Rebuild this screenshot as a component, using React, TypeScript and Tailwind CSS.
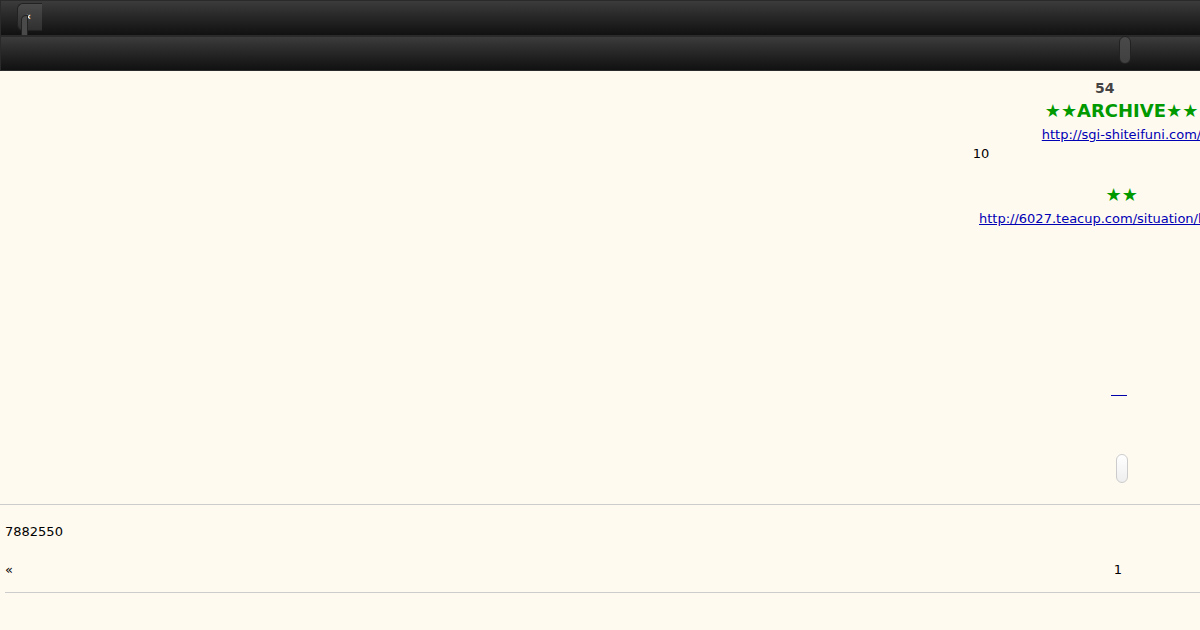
const barClass =
  'flex w-[1240px] items-start border border-[#2a2a2a] bg-gradient-to-b from-[#3c3c3c] to-[#111111]'

function Toolbar() {
  return (
    <header className="w-full overflow-hidden">
      {/* Navigation bar */}
      <div className={`${barClass} h-9 pl-4 pt-0.5`}>
        <div className="relative h-7 w-[25px] rounded-l-md border border-r-0 border-[#222] bg-gradient-to-b from-[#4a4a4a] to-[#303030] text-white">
          <span className="absolute left-[6px] top-[7px] text-[11px] font-bold leading-[12px]">«</span>
          <span className="absolute left-[3px] top-[11px] h-5 w-[7px] rounded-tl-[5px] border border-b-0 border-[#222] bg-[#4a4a4a]" />
        </div>
      </div>
      {/* Title bar */}
      <div className={`${barClass} h-[35px] pl-[1118px]`}>
        <div className="-mt-px h-7 w-3 shrink-0 rounded-[6px] border border-[#222] bg-gradient-to-b from-[#4a4a4a] to-[#404040]" />
      </div>
    </header>
  )
}

export default function App() {
  return (
    <div className="h-[630px] w-[1200px] overflow-hidden whitespace-nowrap bg-[#fffaf0] font-['DejaVu_Sans',sans-serif] text-[13px] leading-[19px] text-black">
      <Toolbar />

      {/* Board introduction */}
      <main className="flex h-[434px] flex-col items-start border-b border-[#cccccc] pt-[7px]">
        <h1 className="ml-[1095px] text-[14px] font-bold leading-[20px] text-[#444444]">54</h1>
        <h2 className="ml-[1044.75px] text-[18px] font-bold leading-[26px] text-[#009900]">★★ARCHIVE★★</h2>
        <a href="#" className="ml-[1041.75px] mt-px text-[#0000b4] underline">http://sgi-shiteifuni.com/</a>
        <p className="ml-[972.75px]">10</p>
        <h2 className="ml-[1105.5px] mt-[19px] text-[18px] font-bold leading-[26px] text-[#009900]">★★</h2>
        <a href="#" className="ml-[979px] mt-px text-[#0000b4] underline">http://6027.teacup.com/situation/bbs</a>
        <a href="#" className="ml-[1111px] mt-[167px] block h-px w-4 bg-[#0000aa]" />
        <button className="ml-[1116px] mt-[58px] h-[29px] w-3 rounded-[6px] border border-[#cccccc] bg-gradient-to-b from-white to-[#eeeeee]" />
      </main>

      {/* Counter and pages */}
      <p className="ml-[5px] mt-[17px]">7882550</p>
      <nav className="ml-[5px] mt-[19px] flex h-[33px] border-b border-[#cccccc]">
        <span className="w-[1108.75px]">«</span>
        <span>1</span>
      </nav>
    </div>
  )
}
